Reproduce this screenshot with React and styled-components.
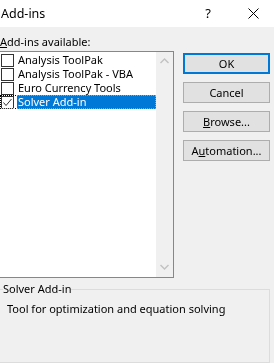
import React from 'react';
import styled, { createGlobalStyle } from 'styled-components';

const GlobalStyle = createGlobalStyle`
    html, body {
        margin: 0;
        padding: 0;
        background: #f0f0f0;
        overflow: hidden;
    }
    body {
        font-family: "Noto Sans", "Liberation Sans", sans-serif;
        font-size: 11px;
        color: #000;
    }
`;

const addins = [
    { name: 'Analysis ToolPak', checked: false },
    { name: 'Analysis ToolPak - VBA', checked: false },
    { name: 'Euro Currency Tools', checked: false },
    { name: 'Solver Add-in', checked: true, selected: true },
];

const App = () => {
    return (
        <>
            <GlobalStyle />
            <Dialog>
                <TitleBar>
                    <Title>Add-ins</Title>
                    <TitleButtons>
                        <Help>?</Help>
                        <svg width="11" height="11" viewBox="0 0 11 11">
                            <path d="M0.5 0.5 L10.5 10.5 M10.5 0.5 L0.5 10.5" stroke="#000" strokeWidth="1" />
                        </svg>
                    </TitleButtons>
                </TitleBar>
                <Body>
                    <Label><u>A</u>dd-ins available:</Label>
                    <MainRow>
                        <ListBox>
                            <Items>
                                {addins.map((a) => (
                                    <Item key={a.name} $focused={a.selected}>
                                        <CheckBox>
                                            {a.checked && (
                                                <svg width="11" height="11" viewBox="0 0 11 11">
                                                    <path d="M1.5 5.5 L4 8.5 L9.5 2" fill="none" stroke="#333" strokeWidth="1" />
                                                </svg>
                                            )}
                                        </CheckBox>
                                        <ItemText $selected={a.selected}>{a.name}</ItemText>
                                    </Item>
                                ))}
                            </Items>
                            <ScrollBar>
                                <svg width="9" height="6" viewBox="0 0 9 6">
                                    <path d="M0.5 5 L4.5 1 L8.5 5" fill="none" stroke="#c2c2c2" strokeWidth="1.4" />
                                </svg>
                                <svg width="9" height="6" viewBox="0 0 9 6">
                                    <path d="M0.5 1 L4.5 5 L8.5 1" fill="none" stroke="#c2c2c2" strokeWidth="1.4" />
                                </svg>
                            </ScrollBar>
                        </ListBox>
                        <Buttons>
                            <Button $primary>OK</Button>
                            <Button>Cancel</Button>
                            <Button><u>B</u>rowse...</Button>
                            <Button>A<u>u</u>tomation...</Button>
                        </Buttons>
                    </MainRow>
                    <Group>
                        <Legend>Solver Add-in</Legend>
                        <Description>Tool for optimization and equation solving</Description>
                    </Group>
                </Body>
            </Dialog>
        </>
    );
};

const Dialog = styled.div`
    width: 274px;
    height: 363px;
    display: flex;
    flex-direction: column;
`;

const TitleBar = styled.div`
    height: 27px;
    background: #fff;
    display: flex;
    align-items: center;
    justify-content: space-between;
    padding-left: 1px;
`;

const Title = styled.div`
    font-size: 12.5px;
    margin-top: -1px;
`;

const TitleButtons = styled.div`
    display: flex;
    align-items: center;
    gap: 37px;
    margin-right: 15px;
`;

const Help = styled.span`
    font-size: 13px;
    margin-top: -1px;
`;

const Body = styled.div`
    flex: 1;
    display: flex;
    flex-direction: column;
    padding-top: 8px;
`;

const Label = styled.div`
    height: 16px;
    line-height: 14px;
`;

const MainRow = styled.div`
    display: flex;
    align-items: flex-start;
    gap: 9px;
`;

const ListBox = styled.div`
    width: 173px;
    height: 225px;
    background: #fff;
    border: 1px solid #828790;
    border-left: none;
    display: flex;
`;

const Items = styled.div`
    flex: 1;
    display: flex;
    flex-direction: column;
    padding-top: 1px;
`;

const Item = styled.div`
    position: relative;
    height: 14px;
    display: flex;
    align-items: center;
    ${(p) => p.$focused && `
        &::after {
            content: '';
            position: absolute;
            inset: 0;
            border: 1px dotted #fff;
            mix-blend-mode: difference;
            pointer-events: none;
        }
    `}
`;

const CheckBox = styled.div`
    width: 11px;
    height: 11px;
    margin-left: 1px;
    border: 1px solid #333;
    background: #fff;
    display: flex;
    align-items: center;
    justify-content: center;
    flex-shrink: 0;
`;

const ItemText = styled.div`
    flex: 1;
    height: 14px;
    line-height: 14px;
    margin-left: 3px;
    padding-left: 1px;
    white-space: nowrap;
    background: ${(p) => (p.$selected ? '#0078d7' : 'transparent')};
    color: ${(p) => (p.$selected ? '#fff' : '#000')};
`;

const ScrollBar = styled.div`
    width: 17px;
    background: #f0f0f0;
    display: flex;
    flex-direction: column;
    justify-content: space-between;
    align-items: center;
    padding: 6px 0 7px;
`;

const Buttons = styled.div`
    display: flex;
    flex-direction: column;
    gap: 8px;
    padding-top: 2px;
`;

const Button = styled.div`
    width: 87px;
    height: 21px;
    box-sizing: border-box;
    display: flex;
    align-items: center;
    justify-content: center;
    background: #e1e1e1;
    border: ${(p) => (p.$primary ? '2px solid #0078d7' : '1px solid #adadad')};
`;

const Group = styled.fieldset`
    margin: 4px 0 0 0;
    width: 270px;
    flex: 1;
    box-sizing: border-box;
    border: 1px solid #dcdcdc;
    border-left: none;
    padding: 0;
`;

const Legend = styled.legend`
    padding: 0;
    margin-left: 3px;
    line-height: 14px;
`;

const Description = styled.div`
    margin-top: 6px;
    padding-left: 7px;
    line-height: 14px;
`;

export default App;
